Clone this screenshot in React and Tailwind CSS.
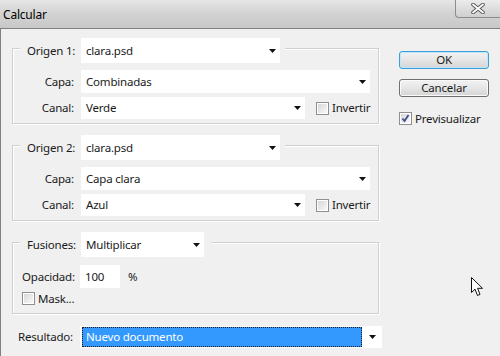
import React from "react";

const Arrow = () => (
    <svg width="7" height="4" viewBox="0 0 7 4" className="shrink-0">
        <polygon points="0,0 7,0 3.5,4" fill="#111" />
    </svg>
);

const Select = ({ w, h = "h-[23px]", text }) => (
    <div className={`${w} ${h} bg-white flex items-center justify-between pl-[5px] pr-[4px]`}>
        <span>{text}</span>
        <Arrow />
    </div>
);

const Check = ({ checked }) => (
    <div className="w-[13px] h-[13px] border border-[#8e8f8f] bg-white p-[1px] shrink-0">
        <div className="w-full h-full bg-gradient-to-br from-[#d8d8d8] to-[#f8f8f8] flex items-center justify-center">
            {checked && (
                <svg width="9" height="9" viewBox="0 0 9 9">
                    <path d="M1.5 4.5 L3.5 7 L7.5 1" fill="none" stroke="#3b4f91" strokeWidth="1.8" />
                </svg>
            )}
        </div>
    </div>
);

const Group = ({ className, children }) => (
    <div className={`w-[367px] border border-[#d0d0d0] shadow-[inset_1px_1px_0_#fff,1px_1px_0_#fff] ${className}`}>
        {children}
    </div>
);

const Legend = ({ label, children, pr = "pr-[5px]" }) => (
    <div className={`-mt-[11px] ml-[7px] w-fit h-[25px] flex items-center bg-[#f0f0f0] pl-[7px] ${pr}`}>
        <span className="w-[54px]">{label}</span>
        {children}
    </div>
);

const Row = ({ label, className, children }) => (
    <div className={`flex items-center ${className}`}>
        <span className="w-[61px] text-right">{label}</span>
        <div className="ml-[7px] flex items-center">{children}</div>
    </div>
);

const Source = ({ n, capa, canal, className }) => (
    <Group className={`pb-[4px] ${className}`}>
        <Legend label={`Origen ${n}:`}>
            <Select w="w-[199px]" h="h-[25px]" text="clara.psd" />
        </Legend>
        <Row label="Capa:" className="mt-[7px]">
            <Select w="w-[289px]" text={capa} />
        </Row>
        <Row label="Canal:" className="mt-[4px]">
            <Select w="w-[224px]" h="h-[22px]" text={canal} />
            <div className="ml-[11px] flex items-center gap-[3px]">
                <Check />
                <span>Invertir</span>
            </div>
        </Row>
    </Group>
);

export default function App() {
    return (
        <div className="relative w-[500px] h-[356px] overflow-hidden bg-[#f0f0f0] text-[11.5px] tracking-[-0.2px] leading-none text-[#1a1a1a] font-['Noto_Sans',sans-serif]">
            {/* title bar */}
            <div className="h-[28px] flex bg-gradient-to-b from-[#e6e6e6] via-[#d2d2d2] to-[#c8c8c8]">
                <span className="pl-[3px] pt-[9px] text-[12px] text-black">Calcular</span>
                <div className="ml-auto w-[45px] h-[18px] border-l border-b border-[#8c8c8c] rounded-bl-[4px] bg-gradient-to-b from-[#ececec] to-[#cfcfcf] flex items-center justify-center">
                    <svg width="14" height="11" viewBox="0 0 14 11">
                        <path d="M2 1.5 L12 9.5 M12 1.5 L2 9.5" stroke="#555" strokeWidth="3.6" strokeLinecap="round" />
                        <path d="M2 1.5 L12 9.5 M12 1.5 L2 9.5" stroke="#fff" strokeWidth="1.8" strokeLinecap="round" />
                    </svg>
                </div>
            </div>

            {/* body */}
            <div className="h-[328px] flex border-t border-l border-[#808080]">
                <div className="w-[390px] pl-[11px]">
                    <Source n={1} capa="Combinadas" canal="Verde" className="mt-[19px]" />
                    <Source n={2} capa="Capa clara" canal="Azul" className="mt-[21px]" />

                    <Group className="mt-[21px] pb-[7px]">
                        <Legend label="Fusiones:" pr="pr-[7px]">
                            <Select w="w-[123px]" h="h-[25px]" text="Multiplicar" />
                        </Legend>
                        <div className="mt-[8px] h-[23px] flex items-center pl-[9px]">
                            <span className="w-[58px]">Opacidad:</span>
                            <div className="w-[40px] h-[23px] bg-white flex items-center pl-[5px]">100</div>
                            <span className="ml-[8px]">%</span>
                        </div>
                        <div className="mt-[3px] h-[15px] flex items-center gap-[3px] pl-[9px]">
                            <Check />
                            <span>Mask...</span>
                        </div>
                    </Group>

                    <div className="mt-[12px] -ml-[11px] flex items-center">
                        <span className="w-[72px] text-right">Resultado:</span>
                        <div className="ml-[7px] w-[302px] h-[22px] bg-white flex items-center">
                            <div className="ml-[2px] w-[280px] h-[20px] bg-[#3399ff] border border-dotted border-[#1a1a1a] text-white flex items-center pl-[3px]">
                                Nuevo documento
                            </div>
                            <div className="flex-1 flex justify-center">
                                <Arrow />
                            </div>
                        </div>
                    </div>
                </div>

                {/* buttons */}
                <div className="ml-[8px] mt-[22px] flex flex-col">
                    <button className="w-[90px] h-[18px] rounded-[3px] border border-[#3c9ed8] shadow-[inset_0_0_0_1px_#bfe6fa] bg-gradient-to-b from-[#f2f2f2] via-[#e6e6e6] to-[#d4d4d4] flex items-center justify-center">
                        OK
                    </button>
                    <button className="mt-[10px] w-[90px] h-[18px] rounded-[3px] border border-[#707070] shadow-[inset_0_0_0_1px_#fafafa] bg-gradient-to-b from-[#f2f2f2] via-[#e6e6e6] to-[#d4d4d4] flex items-center justify-center">
                        Cancelar
                    </button>
                    <div className="mt-[15px] flex items-center gap-[3px]">
                        <Check checked />
                        <span>Previsualizar</span>
                    </div>
                </div>
            </div>

            {/* mouse cursor */}
            <svg className="absolute left-[471px] top-[277px]" width="13" height="20" viewBox="0 0 13 20">
                <path d="M0.5 0.5 L0.5 15.5 L4 12.2 L6.5 18.5 L9 17.4 L6.6 11.3 L11.5 11.3 Z" fill="#fff" stroke="#111" strokeWidth="1" strokeLinejoin="round" />
            </svg>
        </div>
    );
}
